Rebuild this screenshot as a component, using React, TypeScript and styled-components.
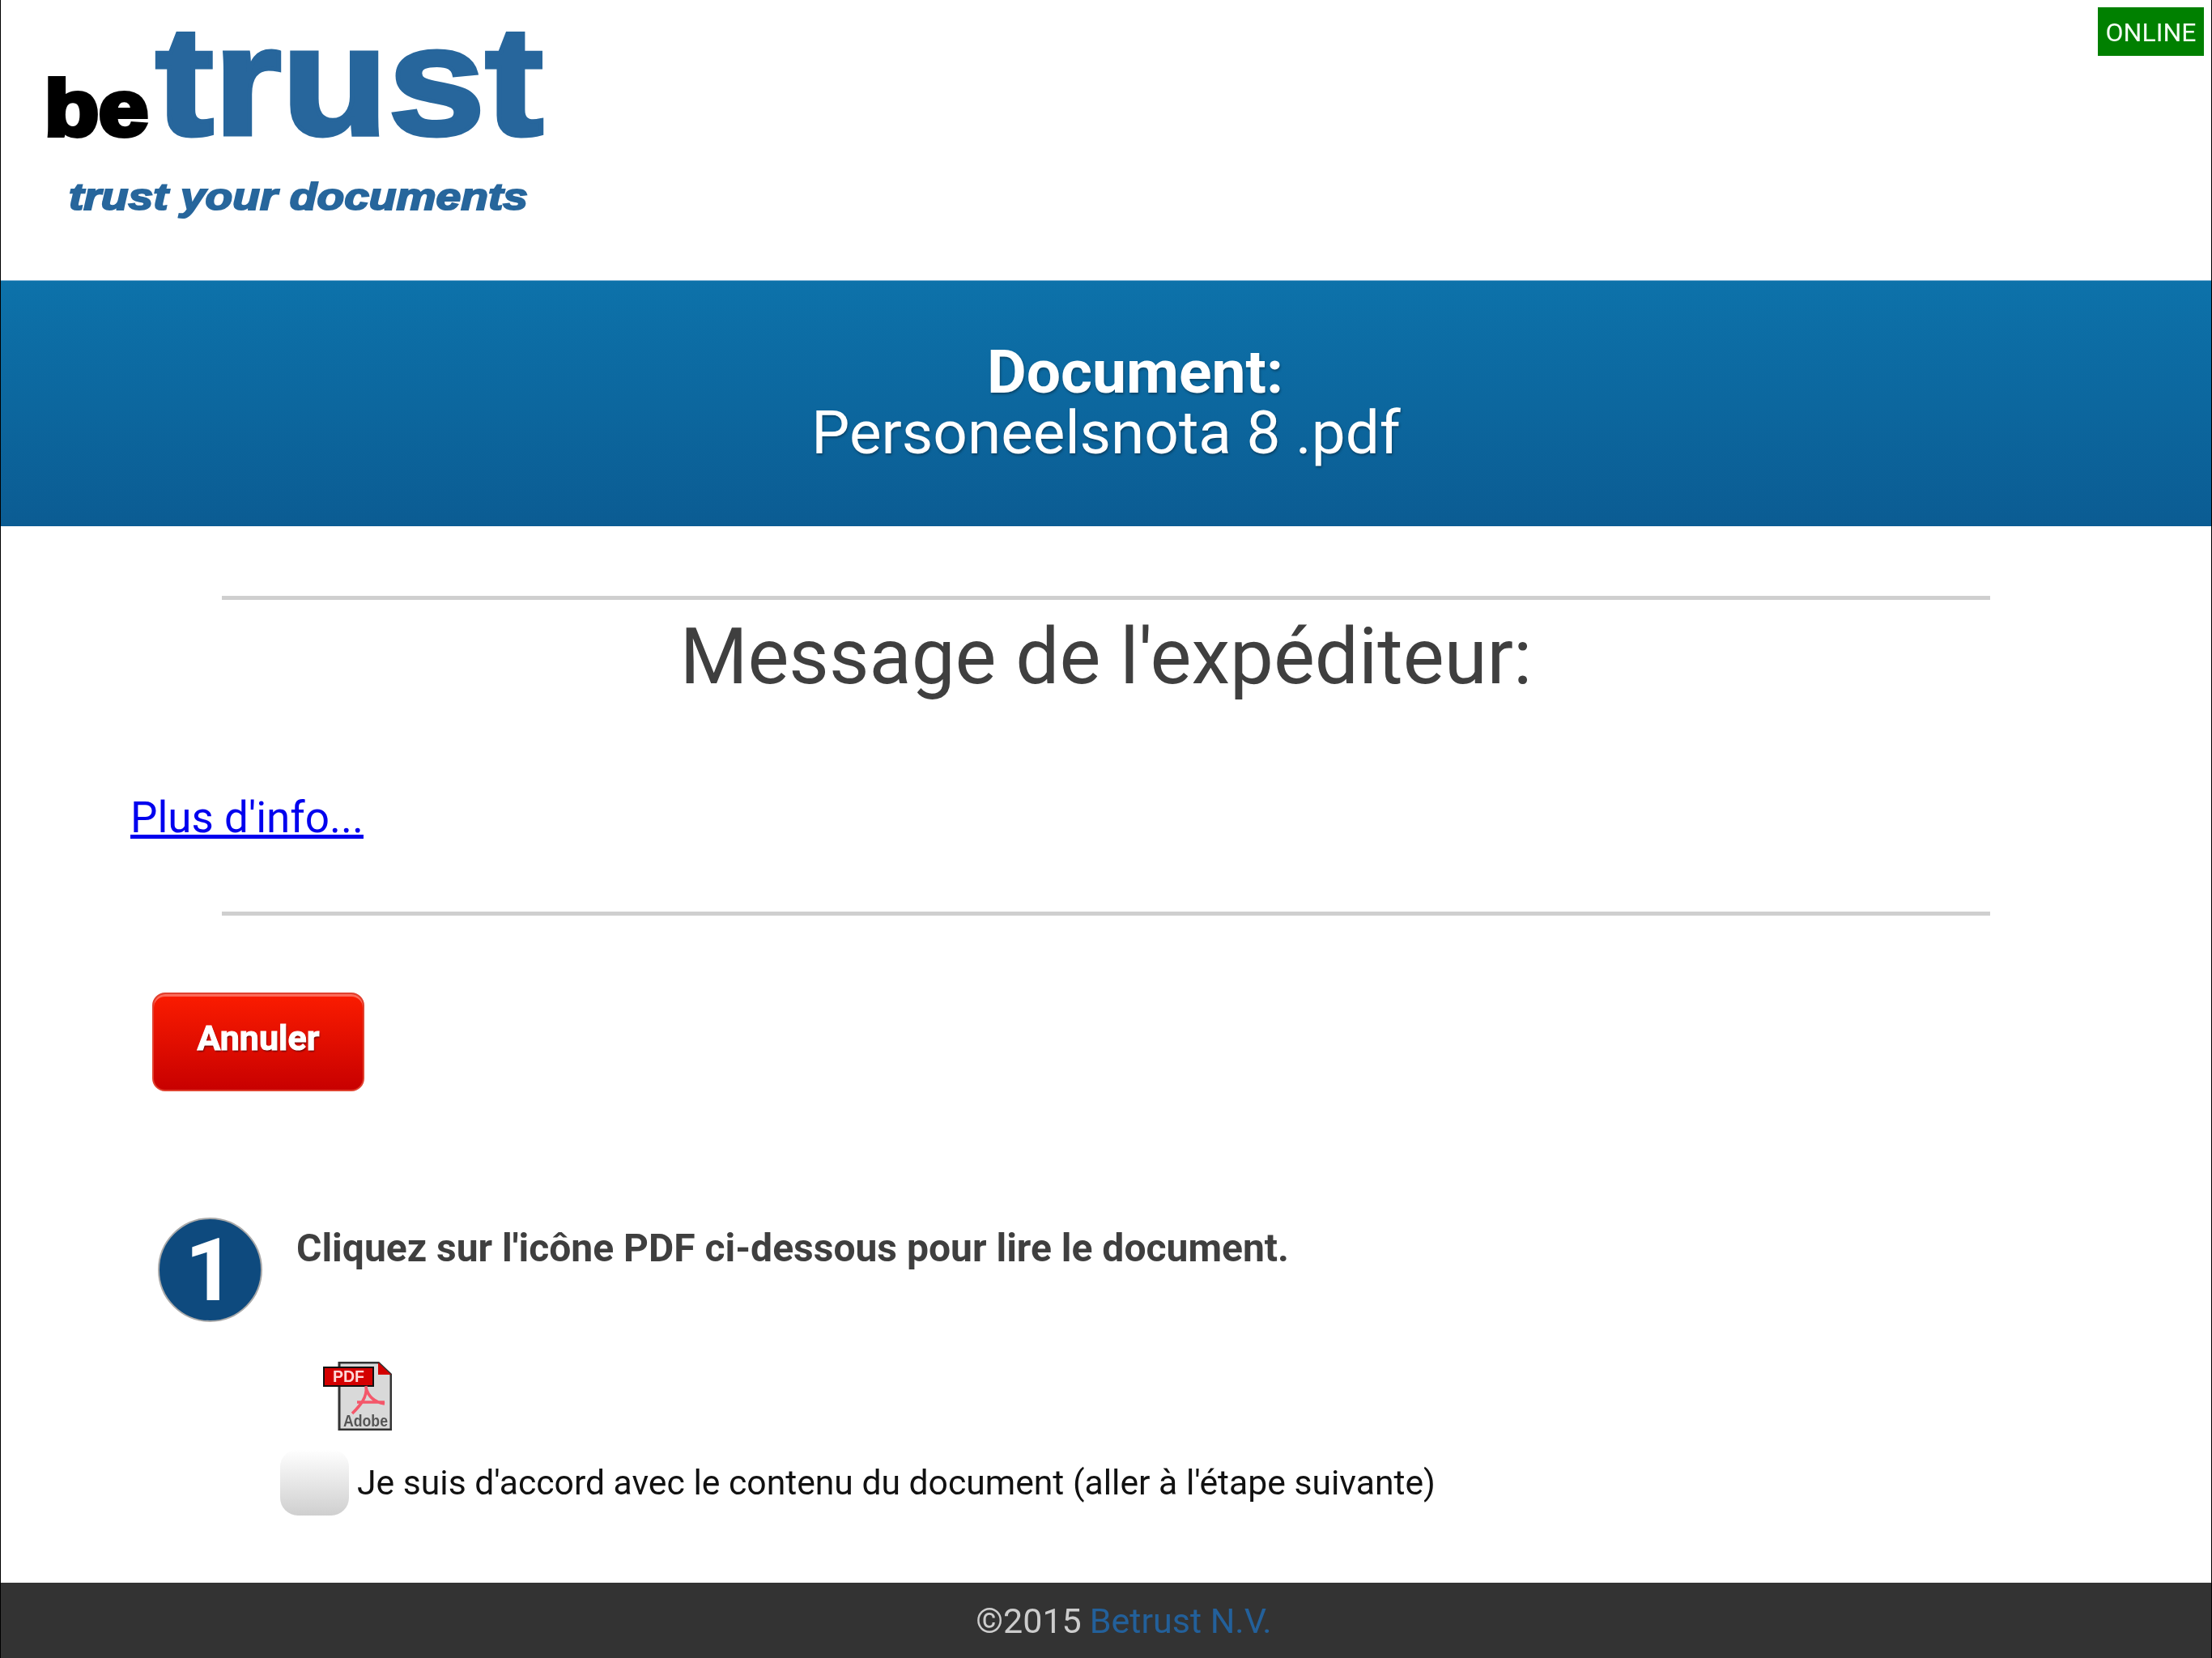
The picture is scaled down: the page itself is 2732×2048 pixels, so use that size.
import React from "react";
import styled, { createGlobalStyle } from "styled-components";

const Global = createGlobalStyle`
  html, body { margin: 0; padding: 0; background: #fff; }
  body { font-family: Roboto, "Liberation Sans", sans-serif; }
  * { box-sizing: border-box; }
`;

const Page = styled.div`
  width: 2732px;
  height: 2048px;
  overflow: hidden;
  display: flex;
  flex-direction: column;
  border-left: 1px solid #000;
  border-right: 1px solid #000;
  filter: blur(0.5px);
`;

const Header = styled.header`
  height: 346px;
  display: flex;
  justify-content: space-between;
  align-items: flex-start;
`;

const LogoArt = styled.svg`
  display: block;
  width: 720px;
  height: 346px;
  filter: blur(0.6px);
`;

const Status = styled.div`
  margin: 9px 9px 0 0;
  width: 131px;
  height: 60px;
  padding-top: 2px;
  background: #008000;
  color: #f4fff4;
  font-size: 32px;
  display: flex;
  align-items: center;
  justify-content: center;
`;

const Band = styled.section`
  height: 304px;
  border-top: 1px solid #7fb1d3;
  background: linear-gradient(#0d72aa, #0b5c93);
  color: #fff;
  display: flex;
  flex-direction: column;
  align-items: center;
  justify-content: center;
  font-size: 75px;
  line-height: 75px;
  padding-bottom: 3px;
  text-shadow: 1px 2px 3px rgba(0, 0, 0, 0.35);
`;

const DocLabel = styled.div`
  font-weight: 700;
  padding-left: 72px;
`;

const DocName = styled.div`
  font-weight: 400;
  font-size: 74.7px;
`;

const Rule = styled.hr<{ $top: number }>`
  border: 0;
  height: 5px;
  background: #cfcfcf;
  margin: ${(p) => p.$top}px 273px 0;
`;

const Title = styled.h1`
  margin: 0;
  margin-top: 14px;
  text-align: center;
  font-size: 96px;
  line-height: 112px;
  font-weight: 400;
  color: #3f3f3f;
`;

const InfoLink = styled.a`
  display: block;
  width: fit-content;
  margin: 113px 0 0 160px;
  padding-right: 4px;
  font-size: 53px;
  line-height: 60px;
  color: #0000ee;
  text-decoration: underline;
`;

const CancelButton = styled.button`
  display: block;
  margin: 95px 0 0 187px;
  width: 262px;
  height: 122px;
  border: 2px solid #e0412f;
  border-radius: 16px;
  background: linear-gradient(#fb1c00, #c80000);
  box-shadow: inset 0 3px 0 rgba(255, 255, 255, 0.35);
  color: #fff;
  font-family: inherit;
  font-size: 43px;
  font-weight: 700;
  -webkit-text-stroke: 1px #fff;
  padding: 0 0 10px;
  text-shadow: 1px 2px 2px rgba(70, 0, 0, 0.7);
`;

const StepRow = styled.div`
  margin: 156px 0 0 194px;
  display: flex;
  align-items: flex-start;
  gap: 42px;
`;

const StepBadge = styled.div`
  width: 129px;
  height: 129px;
  border-radius: 50%;
  background: #0e4a7e;
  border: 2px solid #a9a9a9;
  color: #fff;
  font-size: 108px;
  font-weight: 700;
  display: flex;
  align-items: center;
  justify-content: center;
`;

const StepText = styled.div`
  font-size: 48px;
  line-height: 54px;
  font-weight: 700;
  color: #3f3f3f;
  padding-top: 11px;
`;

const PdfIcon = styled.svg`
  display: block;
  margin: 49px 0 0 398px;
  width: 85px;
  height: 85px;
  filter: blur(0.4px);
`;

const AgreeRow = styled.label`
  margin: 23px 0 0 345px;
  display: flex;
  align-items: center;
  gap: 10px;
  font-size: 42.67px;
  color: #111;
`;

const FakeCheck = styled.span`
  width: 85px;
  height: 82px;
  border-radius: 22px;
  background: linear-gradient(#fff, #cfcfcf);
`;

const Footer = styled.footer`
  margin-top: auto;
  height: 93px;
  background: #333;
  color: #ccc;
  font-size: 43px;
  display: flex;
  align-items: center;
  justify-content: center;
  gap: 10px;
  padding-left: 44px;
`;

const FooterLink = styled.a`
  color: #23609a;
`;

const Logo = () => (
  <LogoArt viewBox="0 0 720 346">
    <text x="54" y="167" fontFamily="Liberation Sans" fontWeight="700" fontSize="97" fill="#000" stroke="#000" strokeWidth="6" textLength="128" lengthAdjust="spacingAndGlyphs">be</text>
    <text x="191" y="166" fontFamily="Liberation Sans" fontWeight="700" fontSize="192" fill="#27669c" stroke="#27669c" strokeWidth="5" textLength="479" lengthAdjust="spacingAndGlyphs">trust</text>
    <text x="84" y="259" fontFamily="Liberation Sans" fontWeight="700" fontStyle="italic" fontSize="46" fill="#27669c" stroke="#27669c" strokeWidth="2" textLength="567" lengthAdjust="spacingAndGlyphs">trust your documents</text>
  </LogoArt>
);

const Pdf = () => (
  <PdfIcon viewBox="0 0 85 85">
    <path d="M20 1H68L84 16V84H20Z" fill="#d9d9d9" stroke="#333" strokeWidth="3" />
    <path d="M68 1L84 16H68Z" fill="#d40000" />
    <rect x="1" y="7" width="61" height="23" fill="#d40000" stroke="#111" strokeWidth="2" />
    <text x="12" y="25" fontFamily="Liberation Sans" fontWeight="700" fontSize="20" fill="#ffd8d8" textLength="39" lengthAdjust="spacingAndGlyphs">PDF</text>
    <path d="M53 30C55 44 46 54 36 64M53 32C56 44 64 50 76 52M42 50H76" fill="none" stroke="#f4576a" strokeWidth="3.5" />
    <text x="25" y="80" fontFamily="Liberation Sans" fontWeight="700" fontSize="20" fill="#555" textLength="55" lengthAdjust="spacingAndGlyphs">Adobe</text>
  </PdfIcon>
);

export default function App() {
  return (
    <Page>
      <Global />
      <Header>
        <Logo />
        <Status>ONLINE</Status>
      </Header>
      <Band>
        <DocLabel>Document:</DocLabel>
        <DocName>Personeelsnota 8 .pdf</DocName>
      </Band>
      <Rule $top={86} />
      <Title>Message de l'expéditeur:</Title>
      <InfoLink href="#">Plus d'info...</InfoLink>
      <Rule $top={86} />
      <CancelButton>Annuler</CancelButton>
      <StepRow>
        <StepBadge>1</StepBadge>
        <StepText>Cliquez sur l'icône PDF ci-dessous pour lire le document.</StepText>
      </StepRow>
      <Pdf />
      <AgreeRow>
        <FakeCheck />
        Je suis d'accord avec le contenu du document (aller à l'étape suivante)
      </AgreeRow>
      <Footer>
        <span>©2015</span>
        <FooterLink>Betrust N.V.</FooterLink>
      </Footer>
    </Page>
  );
}
